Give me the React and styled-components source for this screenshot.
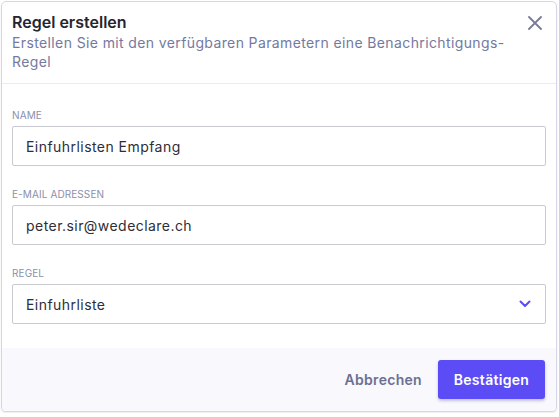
import React from 'react';
import styled, { createGlobalStyle } from 'styled-components';

const GlobalStyle = createGlobalStyle`
  body {
    margin: 0;
    background: #ffffff;
    font-family: Inter, "Liberation Sans", sans-serif;
  }
`;

const Card = styled.div`
  margin: 1px;
  width: 556px;
  box-sizing: border-box;
  border: 1px solid #d6d4e8;
  border-radius: 5px;
  background: #ffffff;
  box-shadow: 0 2px 2px rgba(40, 40, 60, 0.08);
  overflow: hidden;
`;

const Header = styled.div`
  display: flex;
  justify-content: space-between;
  align-items: flex-start;
  padding: 9px 14px 12px 10px;
  border-bottom: 1px solid #ebebf0;
`;

const Title = styled.h2`
  margin: 0;
  font-size: 16px;
  font-weight: 600;
  line-height: 22px;
  color: #25252f;
`;

const Subtitle = styled.p`
  margin: 0;
  font-size: 14px;
  line-height: 19px;
  letter-spacing: 0.38px;
  color: #7479a0;
`;

const CloseButton = styled.button`
  border: none;
  background: none;
  padding: 0;
  margin-top: 5px;
  cursor: pointer;
  display: flex;
`;

const Body = styled.div`
  display: flex;
  flex-direction: column;
  gap: 22px;
  padding: 25px 10px 24px;
`;

const Field = styled.div`
  display: flex;
  flex-direction: column;
`;

const Label = styled.label`
  font-size: 10px;
  line-height: 12px;
  letter-spacing: 0.1px;
  text-transform: uppercase;
  color: #8b8fab;
  margin-bottom: 5px;
`;

const InputBox = styled.div`
  height: 40px;
  box-sizing: border-box;
  border: 1px solid #c9c9d2;
  border-radius: 2px;
  display: flex;
  align-items: center;
  justify-content: space-between;
  padding: 0 14px 0 13px;
  font-size: 14px;
  letter-spacing: 0.45px;
  color: #2e2e38;
`;

const Footer = styled.div`
  display: flex;
  justify-content: flex-end;
  align-items: center;
  gap: 16px;
  background: #f8f8fd;
  padding: 12px 11px 12px;
`;

const Button = styled.button`
  font-family: inherit;
  font-size: 14px;
  font-weight: 600;
  letter-spacing: 0.3px;
  height: 39px;
  border-radius: 3px;
  cursor: pointer;
  border: none;
  padding: ${p => (p.$primary ? '0 15px' : '0')};
  background: ${p => (p.$primary ? '#5b4cf6' : 'transparent')};
  color: ${p => (p.$primary ? '#ffffff' : '#6c7090')};
  box-shadow: ${p => (p.$primary ? '0 2px 3px rgba(40, 30, 120, 0.25)' : 'none')};
  min-width: ${p => (p.$primary ? '107px' : 'auto')};
`;

const CloseIcon = () => (
  <svg width="14" height="14" viewBox="0 0 14 14">
    <path d="M1 1 L13 13 M13 1 L1 13" stroke="#767b98" strokeWidth="1.8" strokeLinecap="round" />
  </svg>
);

const Chevron = () => (
  <svg width="12" height="8" viewBox="0 0 12 8">
    <path d="M1.5 1.5 L6 6 L10.5 1.5" fill="none" stroke="#5b4cf6" strokeWidth="2" strokeLinecap="round" strokeLinejoin="round" />
  </svg>
);

const fields = [
  { label: 'Name', value: 'Einfuhrlisten Empfang' },
  { label: 'E-Mail Adressen', value: 'peter.sir@wedeclare.ch' },
  { label: 'Regel', value: 'Einfuhrliste', select: true },
];

export default function App() {
  return (
    <>
      <GlobalStyle />
      <Card>
        <Header>
          <div>
            <Title>Regel erstellen</Title>
            <Subtitle>
              Erstellen Sie mit den verfügbaren Parametern eine Benachrichtigungs-
              <br />
              Regel
            </Subtitle>
          </div>
          <CloseButton>
            <CloseIcon />
          </CloseButton>
        </Header>
        <Body>
          {fields.map(f => (
            <Field key={f.label}>
              <Label>{f.label}</Label>
              <InputBox>
                <span>{f.value}</span>
                {f.select && <Chevron />}
              </InputBox>
            </Field>
          ))}
        </Body>
        <Footer>
          <Button>Abbrechen</Button>
          <Button $primary>Bestätigen</Button>
        </Footer>
      </Card>
    </>
  );
}
